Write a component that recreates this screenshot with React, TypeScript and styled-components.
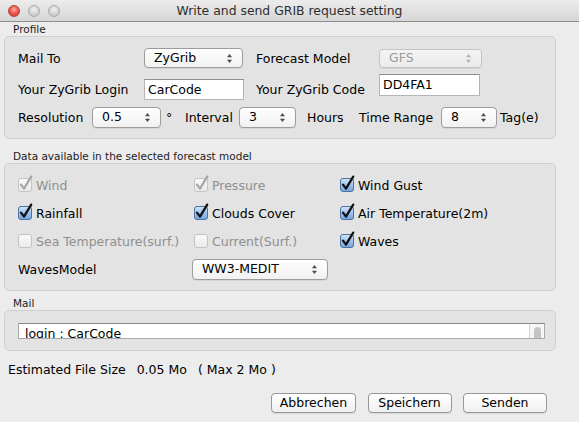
import React from 'react'
import styled, {createGlobalStyle} from 'styled-components'

const GlobalStyle = createGlobalStyle`
  html, body {
    margin: 0;
    padding: 0;
    background: #ececec;
  }
  body {
    font-family: 'DejaVu Sans', Verdana, sans-serif;
    color: #000;
  }
`

function Arrows({disabled}: {disabled?: boolean}) {
  const c = disabled ? '#b4b4b4' : '#4a4a4a'
  return (
    <svg width="7" height="11" viewBox="0 0 7 11">
      <path d="M1 4.3 L3.5 1 L6 4.3 Z" fill={c} />
      <path d="M1 6.7 L3.5 10 L6 6.7 Z" fill={c} />
    </svg>
  )
}

function CheckBox({checked, disabled}: {checked?: boolean; disabled?: boolean}) {
  const boxFill = checked && !disabled ? 'url(#cbBlue)' : 'url(#cbGrey)'
  const stroke = disabled ? '#c3c3c3' : checked ? '#4f6f9c' : '#8d8d8d'
  return (
    <svg width="17" height="17" viewBox="0 0 17 17">
      <defs>
        <linearGradient id="cbBlue" x1="0" y1="0" x2="0" y2="1">
          <stop offset="0" stopColor="#d7e7fb" />
          <stop offset="0.5" stopColor="#9cc2ee" />
          <stop offset="1" stopColor="#6fa5e6" />
        </linearGradient>
        <linearGradient id="cbGrey" x1="0" y1="0" x2="0" y2="1">
          <stop offset="0" stopColor="#fbfbfb" />
          <stop offset="1" stopColor="#e9e9e9" />
        </linearGradient>
      </defs>
      <rect x="1.5" y="3.5" width="13" height="13" rx="2.5" fill={boxFill} stroke={stroke} />
      {checked && (
        <path
          d="M4 9.6 L7 13.6 L14.2 1.6"
          fill="none"
          stroke={disabled ? '#a6a6a6' : '#111'}
          strokeWidth="2.3"
          strokeLinecap="round"
          strokeLinejoin="round"
        />
      )}
    </svg>
  )
}

function Popup({
  value,
  width,
  height,
  disabled,
  ml,
}: {
  value: string
  width: number
  height: number
  disabled?: boolean
  ml?: number
}) {
  return (
    <PopupButton $w={width} $h={height} $disabled={disabled} $ml={ml}>
      <span>{value}</span>
      <Arrows disabled={disabled} />
    </PopupButton>
  )
}

function Check({label, checked, disabled}: {label: string; checked?: boolean; disabled?: boolean}) {
  return (
    <CheckItem $disabled={disabled}>
      <CheckBox checked={checked} disabled={disabled} />
      <span>{label}</span>
    </CheckItem>
  )
}

export default function App() {
  return (
    <Window>
      <GlobalStyle />
      <TitleBar>
        <Lights>
          <Light $red />
          <Light />
          <Light />
        </Lights>
        <Title>Write and send GRIB request setting</Title>
        <span />
      </TitleBar>

      <Body>
        <GroupLabel $h={14} $pt={0}>
          Profile
        </GroupLabel>
        <Group $h={103} $pt={11}>
          <FormRow $h={20}>
            <FieldLabel $w={126}>Mail To</FieldLabel>
            <Popup value="ZyGrib" width={99} height={20} />
            <FieldLabel $w={122} $ml={13}>
              Forecast Model
            </FieldLabel>
            <Popup value="GFS" width={103} height={19} disabled ml={1} />
          </FormRow>
          <FormRow $h={21} $mt={11}>
            <FieldLabel $w={126}>Your ZyGrib Login</FieldLabel>
            <TextField $w={100} $h={21}>
              CarCode
            </TextField>
            <FieldLabel $w={123} $ml={12}>
              Your ZyGrib Code
            </FieldLabel>
            <TextField $w={101} $h={22} $raise>
              DD4FA1
            </TextField>
          </FormRow>
          <FormRow $h={21} $mt={7}>
            <FieldLabel $w={74}>Resolution</FieldLabel>
            <Popup value="0.5" width={69} height={21} />
            <FieldLabel $w={19} $ml={5}>
              °
            </FieldLabel>
            <FieldLabel $w={54}>Interval</FieldLabel>
            <Popup value="3" width={57} height={21} />
            <FieldLabel $w={52} $ml={11}>
              Hours
            </FieldLabel>
            <FieldLabel $w={82}>Time Range</FieldLabel>
            <Popup value="8" width={56} height={21} />
            <FieldLabel $ml={3}>Tag(e)</FieldLabel>
          </FormRow>
        </Group>

        <GroupLabel $h={24} $pt={10}>
          Data available in the selected forecast model
        </GroupLabel>
        <Group $h={128} $pt={11}>
          <CheckGrid>
            <Check label="Wind" checked disabled />
            <Check label="Pressure" checked disabled />
            <Check label="Wind Gust" checked />
            <Check label="Rainfall" checked />
            <Check label="Clouds Cover" checked />
            <Check label="Air Temperature(2m)" checked />
            <Check label="Sea Temperature(surf.)" disabled />
            <Check label="Current(Surf.)" disabled />
            <Check label="Waves" checked />
            <FieldLabel>WavesModel</FieldLabel>
            <Popup value="WW3-MEDIT" width={136} height={21} ml={-2} />
          </CheckGrid>
        </Group>

        <GroupLabel $h={19} $pt={5}>
          Mail
        </GroupLabel>
        <Group $h={41} $pt={12}>
          <MailBox>
            <MailText>login : CarCode</MailText>
            <ScrollTrack>
              <ScrollThumb />
            </ScrollTrack>
          </MailBox>
        </Group>

        <Status>
          <span>Estimated File Size</span>
          <span>0.05 Mo</span>
          <span>( Max 2 Mo )</span>
        </Status>

        <ButtonRow>
          <PushButton $w={85}>Abbrechen</PushButton>
          <PushButton $w={84}>Speichern</PushButton>
          <PushButton $w={84}>Senden</PushButton>
        </ButtonRow>
      </Body>
    </Window>
  )
}

const Window = styled.div`
  width: 579px;
  height: 422px;
  overflow: hidden;
  background: #ececec;
`

const TitleBar = styled.div`
  display: grid;
  grid-template-columns: 1fr auto 1fr;
  align-items: center;
  height: 21px;
  border-bottom: 1px solid #8e8e8e;
  background: linear-gradient(#ececec, #d6d6d6);
`

const Lights = styled.div`
  display: flex;
  gap: 8px;
  padding-left: 8px;
`

const Light = styled.div<{$red?: boolean}>`
  width: 12px;
  height: 12px;
  box-sizing: border-box;
  border-radius: 50%;
  border: 1px solid ${({$red}) => ($red ? '#b8423b' : '#a9a9a9')};
  background: ${({$red}) =>
    $red
      ? 'radial-gradient(circle at 50% 35%, #fbb0aa 0, #ec5b53 45%, #c8352e 100%)'
      : 'radial-gradient(circle at 50% 35%, #f4f4f4 0, #d6d6d6 50%, #bdbdbd 100%)'};
`

const Title = styled.div`
  font-size: 12.4px;
  color: #2e2e2e;
  white-space: nowrap;
`

const Body = styled.div`
  padding: 0 23px 0 4px;
`

const GroupLabel = styled.div<{$h: number; $pt: number}>`
  box-sizing: border-box;
  height: ${({$h}) => $h}px;
  padding: ${({$pt}) => $pt}px 0 0 9px;
  font-size: 10.5px;
  line-height: 14px;
  color: #1c1c1c;
`

const Group = styled.div<{$h: number; $pt: number}>`
  box-sizing: border-box;
  height: ${({$h}) => $h}px;
  padding: ${({$pt}) => $pt}px 0 0 13px;
  border: 1px solid #d0d0d0;
  border-radius: 5px;
  background: #e3e3e3;
`

const FormRow = styled.div<{$h: number; $mt?: number}>`
  display: flex;
  align-items: center;
  height: ${({$h}) => $h}px;
  margin-top: ${({$mt}) => $mt ?? 0}px;
`

const FieldLabel = styled.span<{$w?: number; $ml?: number}>`
  flex: none;
  width: ${({$w}) => ($w ? `${$w}px` : 'auto')};
  margin-left: ${({$ml}) => $ml ?? 0}px;
  font-size: 12.5px;
  white-space: nowrap;
`

const PopupButton = styled.div<{$w: number; $h: number; $disabled?: boolean; $ml?: number}>`
  flex: none;
  box-sizing: border-box;
  display: flex;
  align-items: center;
  justify-content: space-between;
  width: ${({$w}) => $w}px;
  height: ${({$h}) => $h}px;
  margin-left: ${({$ml}) => $ml ?? 0}px;
  padding: 0 9px 0 9px;
  border: 1px solid ${({$disabled}) => ($disabled ? '#c4c4c4' : '#9c9c9c')};
  border-radius: 4px;
  background: ${({$disabled}) =>
    $disabled ? 'linear-gradient(#f4f4f4, #ebebeb)' : 'linear-gradient(#ffffff, #f1f1f1)'};
  box-shadow: 0 1px 0 rgba(0, 0, 0, 0.06);
  font-size: 12.5px;
  color: ${({$disabled}) => ($disabled ? '#9a9a9a' : '#000')};
  span {
    margin-top: -2px;
  }
`

const TextField = styled.div<{$w: number; $h: number; $raise?: boolean}>`
  flex: none;
  box-sizing: border-box;
  width: ${({$w}) => $w}px;
  height: ${({$h}) => $h}px;
  margin-top: ${({$raise}) => ($raise ? -9 : 0)}px;
  padding: 2px 0 0 3px;
  border: 1px solid #b4b4b4;
  border-top-color: #8e8e8e;
  background: #fff;
  font-size: 12.5px;
  line-height: 15px;
`

const CheckGrid = styled.div`
  display: grid;
  grid-template-columns: 176px 146px 1fr;
  grid-auto-rows: 20px;
  row-gap: 8px;
  align-items: center;
`

const CheckItem = styled.div<{$disabled?: boolean}>`
  display: flex;
  align-items: center;
  gap: 2px;
  font-size: 12.5px;
  white-space: nowrap;
  color: ${({$disabled}) => ($disabled ? '#8f8f8f' : '#000')};
  svg {
    margin-left: -1px;
    margin-top: -3px;
    flex: none;
  }
`

const MailBox = styled.div`
  box-sizing: border-box;
  display: flex;
  width: 527px;
  height: 16px;
  overflow: hidden;
  border: 1px solid #a9a9a9;
  border-top-color: #8a8a8a;
  background: #fff;
`

const MailText = styled.div`
  flex: 1;
  padding: 2px 0 0 6px;
  font-size: 12.5px;
  line-height: 15px;
  white-space: nowrap;
`

const ScrollTrack = styled.div`
  flex: none;
  width: 14px;
  display: flex;
  justify-content: center;
  border-left: 1px solid #d8d8d8;
  background: #f6f6f6;
`

const ScrollThumb = styled.div`
  width: 7px;
  height: 11px;
  margin-top: 3px;
  border-radius: 4px 4px 0 0;
  background: #c4c4c4;
`

const Status = styled.div`
  display: flex;
  gap: 11px;
  margin-top: 11px;
  padding-left: 4px;
  font-size: 12.5px;
  line-height: 16px;
`

const ButtonRow = styled.div`
  display: flex;
  justify-content: flex-end;
  gap: 11.5px;
  margin-top: 15px;
  padding-right: 9px;
`

const PushButton = styled.div<{$w: number}>`
  box-sizing: border-box;
  display: flex;
  align-items: center;
  justify-content: center;
  width: ${({$w}) => $w}px;
  height: 20px;
  border: 1px solid #979797;
  border-radius: 4px;
  background: linear-gradient(#ffffff, #f0f0f0);
  box-shadow: 0 1px 0 rgba(0, 0, 0, 0.08);
  font-size: 12.5px;
  padding-bottom: 1px;
`
